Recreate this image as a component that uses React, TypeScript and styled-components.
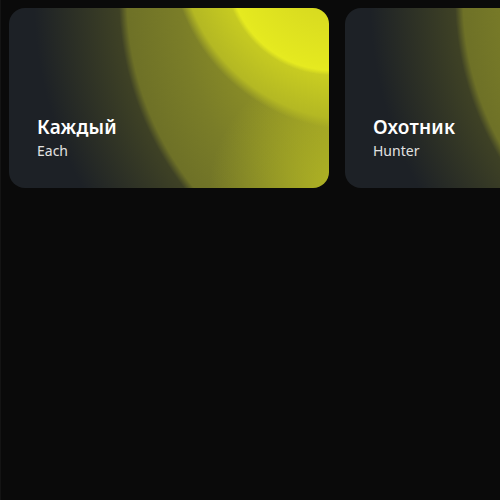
import React from "react";
import styled, { createGlobalStyle } from "styled-components";

const Global = createGlobalStyle`
  html, body {
    margin: 0;
    padding: 0;
    background: #0a0a0a;
    min-height: 100%;
  }
  body {
    font-family: "Noto Sans", "DejaVu Sans", sans-serif;
    color: #fff;
  }
`;

const Page = styled.div`
  min-height: 500px;
  box-sizing: border-box;
  border-left: 1px solid #141414;
  padding: 8px 0 8px 8px;
  overflow: hidden;
`;

const Row = styled.div`
  display: flex;
  gap: 16px;
`;

const Card = styled.div`
  flex: 0 0 320px;
  height: 180px;
  box-sizing: border-box;
  border-radius: 16px;
  padding: 0 28px 28px;
  display: flex;
  flex-direction: column;
  justify-content: flex-end;
  background:
    radial-gradient(circle at 322px -40px, #cfd021 0px, #e4e81f 96px, #e6ea20 102px, rgba(230, 234, 32, 0) 107px),
    radial-gradient(circle at 347px -64px, #d6da20 110px, #b4b823 176px, rgba(180, 184, 35, 0) 186px),
    radial-gradient(circle at 330px 185px, rgba(196, 200, 34, 0.7) 0px, rgba(196, 200, 34, 0) 130px),
    radial-gradient(circle at 420px -10px, #a2a524 120px, #7a7d28 250px, #6e7127 302px, #3e4125 310px, rgba(29, 33, 38, 0) 395px),
    #1d2126;
`;

const Title = styled.div`
  font-size: 19px;
  font-weight: 600;
  line-height: 24px;
  letter-spacing: 0.2px;
`;

const Subtitle = styled.div`
  margin-top: 2px;
  font-size: 14px;
  line-height: 19px;
  color: #e2e2e2;
`;

const items = [
  { title: "Каждый", sub: "Each" },
  { title: "Охотник", sub: "Hunter" },
];

export default function App() {
  return (
    <>
      <Global />
      <Page>
        <Row>
          {items.map((it) => (
            <Card key={it.title}>
              <Title>{it.title}</Title>
              <Subtitle>{it.sub}</Subtitle>
            </Card>
          ))}
        </Row>
      </Page>
    </>
  );
}
